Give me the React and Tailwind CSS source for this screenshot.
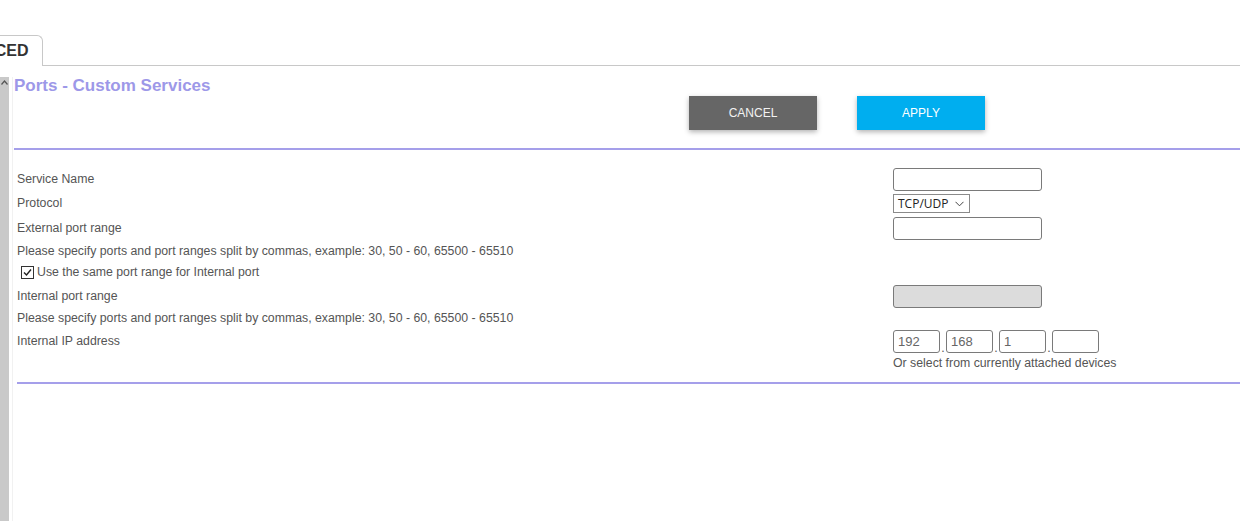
import React from 'react';

const labelCls = 'w-[879px] pl-[3px] shrink-0';

function Row({ h, label, children }) {
  return (
    <div className={`flex items-center ${h}`}>
      <div className={labelCls}>{label}</div>
      <div className="flex items-center">{children}</div>
    </div>
  );
}

function TextBox({ disabled }) {
  return (
    <input
      type="text"
      disabled={disabled}
      className={`w-[149px] h-[23px] rounded-[3px] border border-[#7a7a7a] outline-none ${disabled ? 'bg-[#dcdcdc]' : 'bg-white'}`}
    />
  );
}

function IpBox({ value }) {
  return (
    <input
      type="text"
      defaultValue={value}
      className="w-[47px] h-[23px] rounded-[3px] border border-[#7a7a7a] px-[4px] text-[13px] text-[#666] outline-none"
    />
  );
}

export default function App() {
  return (
    <div className="w-[1240px] h-[521px] bg-white overflow-hidden text-[12.3px] text-[#555]" style={{ fontFamily: '"Liberation Sans", Arial, sans-serif' }}>
      <div className="h-[35px]" />

      {/* tab strip */}
      <div className="flex h-[31px]">
        <div className="w-[43px] shrink-0 border-t border-r border-[#c8c8c8] rounded-tr-[6px] overflow-hidden flex items-center">
          <span className="ml-[-61px] text-[16px] font-bold text-[#333] whitespace-nowrap">ADVANCED</span>
        </div>
        <div className="flex-1 border-b border-[#c8c8c8]" />
      </div>

      <div className="h-[11px]" />

      <div className="flex h-[444px]">
        {/* scrollbar */}
        <div className="w-[9px] shrink-0 bg-[#c9c9c9] flex justify-center pt-[3px]">
          <svg width="7" height="5" viewBox="0 0 7 5">
            <path d="M0.5 4.5 L3.5 1 L6.5 4.5" fill="none" stroke="#555" strokeWidth="1.2" />
          </svg>
        </div>
        <div className="w-[3px] shrink-0" />
        <div className="w-[1px] shrink-0 bg-[#f1f1f1]" />
        <div className="w-[1px] shrink-0" />

        <div className="flex-1 flex flex-col">
          <h1 className="text-[17px] leading-[18px] font-bold text-[#9d98e8]">Ports - Custom Services</h1>

          <div className="flex gap-[40px] ml-[675px] mt-[1px]">
            <button className="w-[128px] h-[34px] bg-[#666666] text-[#f2f2f2] text-[12px] shadow-[0_2px_5px_rgba(0,0,0,0.3)]">CANCEL</button>
            <button className="w-[128px] h-[34px] bg-[#00aeef] text-white text-[12px] shadow-[0_2px_5px_rgba(0,0,0,0.3)]">APPLY</button>
          </div>

          <div className="mt-[18px] h-[2px] bg-[#a59fea]" />

          <div className="mt-[17px] flex flex-col">
            <Row h="h-[24px]" label="Service Name">
              <TextBox />
            </Row>
            <Row h="h-[25px]" label="Protocol">
              <div className="w-[77px] h-[19px] border border-[#8a8a8a] flex items-center justify-between pl-[4px] pr-[5px] text-[12px] text-[#222]" style={{ fontFamily: '"Open Sans", "Noto Sans", sans-serif' }}>
                <span>TCP/UDP</span>
                <svg width="9" height="6" viewBox="0 0 9 6">
                  <path d="M0.5 0.8 L4.5 4.8 L8.5 0.8" fill="none" stroke="#444" strokeWidth="1" />
                </svg>
              </div>
            </Row>
            <Row h="h-[25px]" label="External port range">
              <TextBox />
            </Row>
            <div className="h-[20px] flex items-center pl-[3px]">
              Please specify ports and port ranges split by commas, example: 30, 50 - 60, 65500 - 65510
            </div>
            <div className="h-[23px] flex items-center pl-[7px] gap-[3px]">
              <span className="w-[13px] h-[13px] border border-[#333] bg-white flex items-center justify-center">
                <svg width="11" height="11" viewBox="0 0 11 11">
                  <path d="M2 5.5 L4.5 8 L9 2.5" fill="none" stroke="#222" strokeWidth="1.4" />
                </svg>
              </span>
              <span>Use the same port range for Internal port</span>
            </div>
            <Row h="h-[24px]" label="Internal port range">
              <TextBox disabled />
            </Row>
            <div className="h-[21px] flex items-center pl-[3px]">
              Please specify ports and port ranges split by commas, example: 30, 50 - 60, 65500 - 65510
            </div>
            <Row h="h-[24px]" label="Internal IP address">
              <div className="flex items-end">
                <IpBox value="192" />
                <span className="w-[6px] text-center leading-[10px] text-[#555]">.</span>
                <IpBox value="168" />
                <span className="w-[6px] text-center leading-[10px] text-[#555]">.</span>
                <IpBox value="1" />
                <span className="w-[6px] text-center leading-[10px] text-[#555]">.</span>
                <IpBox value="" />
              </div>
            </Row>
            <div className="flex h-[20px] items-center">
              <div className={labelCls} />
              <div>Or select from currently attached devices</div>
            </div>
          </div>

          <div className="mt-[9px] ml-[3px] h-[2px] bg-[#a59fea]" />
        </div>
      </div>
    </div>
  );
}
